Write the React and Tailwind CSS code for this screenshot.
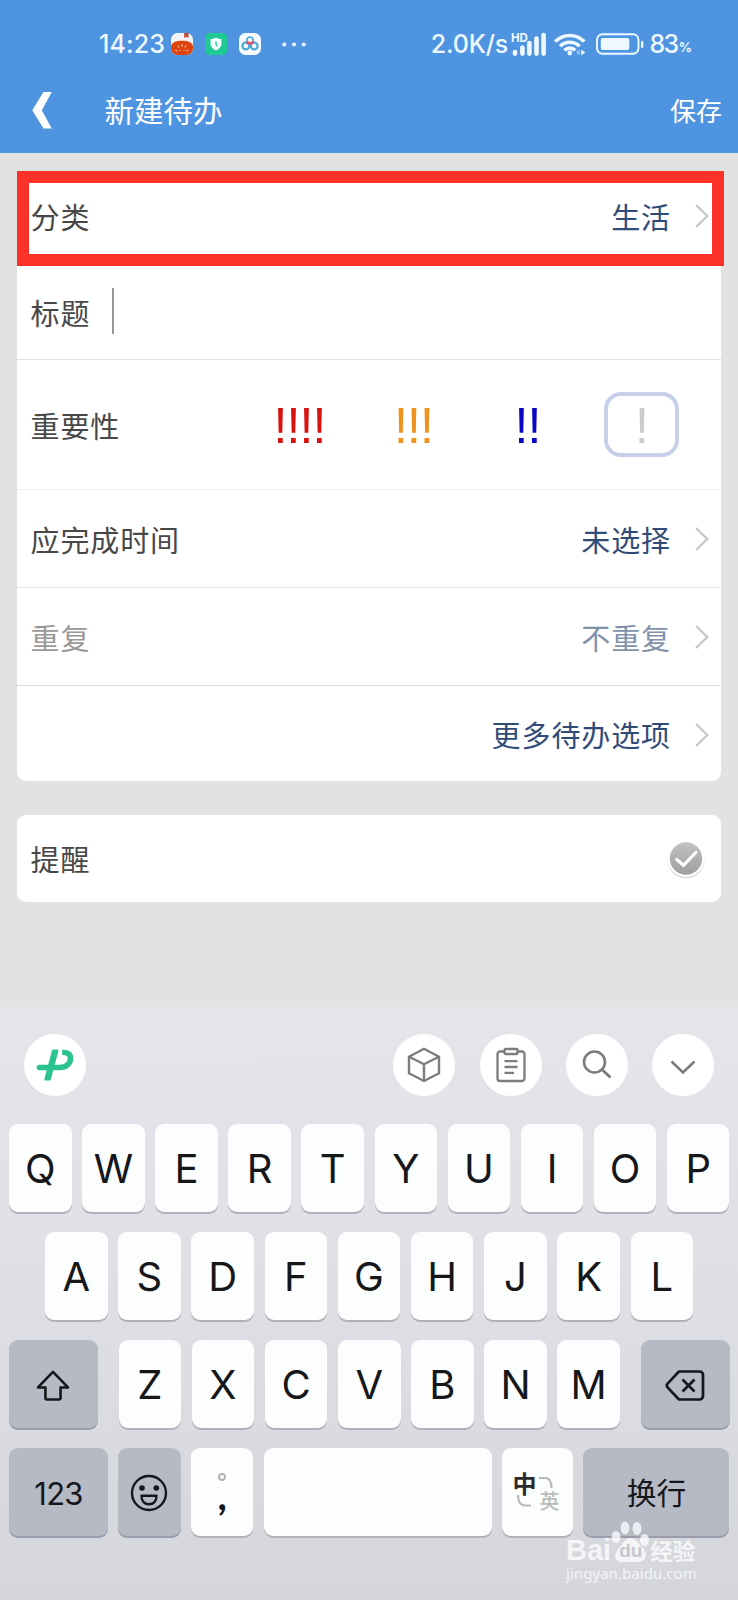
import React, { useState } from 'react';
import clsx from 'clsx';

const cjk = "font-['Noto_Sans_CJK_SC',sans-serif]";

const priorities = [
  { id: 4, mark: '!!!!', color: 'text-[#d8120f]' },
  { id: 3, mark: '!!!', color: 'text-[#ee931f]' },
  { id: 2, mark: '!!', color: 'text-[#0a06c4]' },
  { id: 1, mark: '!', color: 'text-[#cbcbcd]' },
];

const topRow = ['Q', 'W', 'E', 'R', 'T', 'Y', 'U', 'I', 'O', 'P'];
const middleRow = ['A', 'S', 'D', 'F', 'G', 'H', 'J', 'K', 'L'];
const bottomRow = ['Z', 'X', 'C', 'V', 'B', 'N', 'M'];

const Chevron = () => (
  <svg className="h-6 w-[14px] shrink-0" viewBox="0 0 14 24" fill="none" stroke="#c6c6c8" strokeWidth="2.2">
    <path d="M1 1 12.4 12 1 23" />
  </svg>
);

const StatusBar = () => (
  <div className="flex h-[88px] items-center pl-[99px] pr-[46px] font-['Inter',sans-serif] text-[25px] font-medium text-[#eef8ff]">
    <span className="mt-[2px] w-[65px] tracking-[0.1px] whitespace-nowrap">14:23</span>

    {/* Notification icons */}
    <svg className="ml-[7px] h-[22px] w-[22px]" viewBox="0 0 22 22">
      <rect width="22" height="22" rx="6.5" fill="#f4f5f7" />
      <path d="M0 13.5C.5 9.5 5 7.8 11 7.8s10.5 1.7 11 5.7v2A6.5 6.5 0 0 1 15.5 22h-9A6.5 6.5 0 0 1 0 15.5Z" fill="#dd4410" />
      <path d="M13.2 0h4.300v5l-2.100-1.300L13.200 5Z" fill="#c8452c" />
      <path d="M11 11v2.500M7 12.500l1 2M15 12.500l-1 2M4.500 17.500l2 .5M17.500 17.500l-2 .5M8.500 18l1-1M13.500 18l-1-1" stroke="#ffd9a8" strokeWidth="1" fill="none" />
    </svg>
    <svg className="ml-[12px] h-[22px] w-[22px]" viewBox="0 0 22 22">
      <rect width="22" height="22" rx="4.5" fill="#20c893" />
      <path d="M11 4.500c2 1.200 3.500 1.500 5.500 1.700v4.300c0 3.500-2.500 5.500-5.500 7-3-1.500-5.500-3.500-5.500-7V6.200c2-.2 3.500-.5 5.500-1.700Z" fill="#f2fffa" />
      <path d="M11 8.500v3l1.200 1.500" stroke="#20c893" strokeWidth="1.4" fill="none" />
    </svg>
    <svg className="ml-[12px] h-[22px] w-[22px]" viewBox="0 0 22 22" fill="none">
      <rect width="22" height="22" rx="6.5" fill="#f7fbff" />
      <circle cx="6.800" cy="13" r="3.400" stroke="#4aabd6" strokeWidth="2.200" />
      <circle cx="15.200" cy="13" r="3.400" stroke="#4aabd6" strokeWidth="2.200" />
      <circle cx="11" cy="7.500" r="3.300" stroke="#4aabd6" strokeWidth="1.800" />
      <path d="M8 8.500a3.300 3.300 0 0 0 6 0" stroke="#e8475c" strokeWidth="2.600" />
    </svg>
    <svg className="ml-[21px] h-[5px] w-[24px]" viewBox="0 0 24 5" fill="#e4f2fd">
      <circle cx="2.300" cy="2.500" r="2.100" />
      <circle cx="12" cy="2.500" r="2.100" />
      <circle cx="21.700" cy="2.500" r="2.100" />
    </svg>

    <div className="ml-auto flex items-center">
      <span className="mt-[2px] tracking-[-0.200px]">2.0K/s</span>

      {/* Signal strength */}
      <svg className="ml-[3.500px] h-[24px] w-[36px]" viewBox="0 0 36 24">
        <text x="0" y="9.500" fontSize="11.500" fontWeight="700" fill="#eef8ff" fontFamily="Inter, sans-serif">HD</text>
        <path d="M4 20v1.600M11.400 15.600v6M18.400 11v10.600M25.500 6.600v15M32.600 3v18.600" stroke="#eef8ff" strokeWidth="4.600" strokeLinecap="round" />
      </svg>

      {/* Wi-Fi */}
      <svg className="ml-[7px] h-[24px] w-[32px]" viewBox="0 0 32 24" fill="none" stroke="#eef8ff" strokeWidth="3.600">
        <path d="M1.200 9.600a20.500 20.500 0 0 1 29.200 0" />
        <path d="M6 14.200a14 14 0 0 1 19.600 0" />
        <path d="M10.300 18.300a8 8 0 0 1 11 0" />
        <circle cx="15.800" cy="21" r="2.400" fill="#eef8ff" stroke="none" />
        <path d="M25.600 17.500v6l-3.600-3.200Z" fill="#9fc5f0" stroke="none" />
        <path d="M27.200 17.500v6l4-3Z" fill="#eef8ff" stroke="none" />
      </svg>

      {/* Battery */}
      <svg className="ml-[10px] h-[22px] w-[48px]" viewBox="0 0 48 22">
        <rect x="1" y="1.200" width="41.500" height="19.600" rx="5.500" fill="none" stroke="#eef8ff" strokeWidth="1.900" />
        <rect x="4.800" y="5" width="28.500" height="12" rx="2" fill="#eef8ff" />
        <rect x="45" y="8" width="2.300" height="7" rx="1.100" fill="#eef8ff" />
      </svg>
      <span className="ml-[5px] mt-[2px] tracking-[-1.800px]">83</span>
      <span className="ml-[1.500px] mt-[8px] text-[13px] font-bold">%</span>
    </div>
  </div>
);

const Header = () => (
  <header className="h-[152.500px] bg-[#4f94e0]">
    <StatusBar />
    <div className="flex h-[43px] items-center pl-[32px] pr-[16px] text-[29.500px] leading-none text-white">
      <svg className="mt-[2px] h-[37px] w-[21px]" viewBox="0 0 21 38" fill="#fff">
        <path d="M11.500 0H20L9.800 18.800 20 37.500h-8.500L0 18.800Z" />
      </svg>
      <span className="ml-[51.500px]">新建待办</span>
      <span className="ml-auto mt-[1px] text-[26px]">保存</span>
    </div>
  </header>
);

const OptionRow = ({ label, value, className, muted }) => (
  <div className={clsx('flex items-center pl-[13.500px] pr-[12px]', className)}>
    <span className={muted ? 'text-[#989898]' : 'text-[#484848]'}>{label}</span>
    <span className={clsx('ml-auto mr-[24px]', muted ? 'text-[#8192ab]' : 'text-[#314b78]')}>{value}</span>
    <Chevron />
  </div>
);

const TodoForm = () => {
  const [priority, setPriority] = useState(1);

  return (
    <main className="h-[854.500px] pl-[17px] pr-[17px] pt-[18.500px] text-[29px] leading-none tracking-[0.900px]">
      <section className="rounded-[9px] bg-white">
        {/* Highlighted category row */}
        <div className="relative">
          <OptionRow label="分类" value="生活" className="h-[95px] pb-[5px]" />
          <div className="absolute inset-y-0 left-0 -right-[2.500px] border-[12px] border-[#fc3127]" />
        </div>

        <div className="flex h-[94px] items-center border-b border-[#e0e0e1] pl-[13.500px]">
          <span className="text-[#484848]">标题</span>
          <span className="-mt-[4px] ml-[22px] h-[46px] w-[1.500px] bg-[#969696]" />
        </div>

        <div className="flex h-[130px] items-center border-b border-[#eeeeef] pl-[13.500px]">
          <span className="w-[231px] pt-[1px] text-[#484848]">重要性</span>
          {priorities.map((item) => (
            <button
              key={item.id}
              onClick={() => setPriority(item.id)}
              className={clsx(
                "mr-[39px] flex h-[65px] w-[75px] shrink-0 items-center justify-center rounded-[17px] border-4 pl-[1px] pt-[3px] font-['Liberation_Sans',sans-serif] text-[50px] leading-none tracking-[-0.900px]",
                item.color,
                priority === item.id ? 'border-[#c6d0e9]' : 'border-transparent'
              )}
            >
              {item.mark}
            </button>
          ))}
        </div>

        <OptionRow label="应完成时间" value="未选择" className="h-[98px] border-b border-[#e0e0e1] pt-[1px]" />
        <OptionRow label="重复" value="不重复" muted className="h-[98px] border-b border-[#dcdcdd] pt-[1px]" />
        <OptionRow label="" value="更多待办选项" className="h-[95px] pt-[2px]" />
      </section>

      <section className="mt-[34px] flex h-[87px] items-center rounded-[9px] bg-white pl-[13.500px] pr-[15.500px]">
        <span className="text-[#484848]">提醒</span>
        <svg className="ml-auto h-[40px] w-[40px]" viewBox="0 0 40 40" fill="none">
          <defs>
            <linearGradient id="check" x1="0" y1="0" x2="0" y2="1">
              <stop offset="0" stopColor="#c2c2c2" />
              <stop offset="1" stopColor="#9f9f9f" />
            </linearGradient>
          </defs>
          <circle cx="20" cy="20.800" r="18.500" fill="#d9d9d9" />
          <circle cx="20" cy="19.500" r="18.500" fill="#fff" />
          <circle cx="20" cy="19.500" r="16.200" fill="url(#check)" />
          <path d="m10.800 20.500 6.700 5.800L29.800 13.500" stroke="#fff" strokeWidth="3.200" strokeLinecap="round" />
        </svg>
      </section>
    </main>
  );
};

const Key = ({ children, className, dark }) => (
  <button
    className={clsx(
      'flex h-[88px] shrink-0 items-center justify-center rounded-[9px] text-[#15171a]',
      dark ? 'bg-[#b5bac4] shadow-[0_2px_0_#9a9dab]' : 'bg-[#fcfdfd] shadow-[0_2px_0_#b1b1b9]',
      className
    )}
  >
    {children}
  </button>
);

const LetterKeys = ({ letters }) =>
  letters.map((letter) => (
    <Key key={letter} className="w-[62.500px] pt-[2px] font-['Inter',sans-serif] text-[40px] leading-none">
      {letter}
    </Key>
  ));

const ToolButton = ({ children }) => (
  <button className="flex h-[62px] w-[62px] items-center justify-center rounded-full bg-white">{children}</button>
);

const Toolbar = () => (
  <div className="flex items-center pl-[24px] pr-[24px] pt-[27px]">
    <ToolButton>
      <svg className="h-[34px] w-[38px]" viewBox="0 0 38 34" fill="none" stroke="#2cc38f">
        <path d="M17 2.500h4.500L13.800 31.500H9.300Z" fill="#2cc38f" strokeWidth="2" strokeLinejoin="round" />
        <path d="M3.500 19.500H24c6.500 0 10.500-4.300 10.500-9.200 0-4.300-3.300-6-8.300-6" strokeWidth="5.600" />
        <circle cx="3.500" cy="19.500" r="2.800" fill="#2cc38f" stroke="none" />
      </svg>
    </ToolButton>
    <div className="ml-auto flex gap-[24.200px]">
      <ToolButton>
        <svg className="h-[36px] w-[34px]" viewBox="0 0 34 36" fill="none" stroke="#7c7c7a" strokeWidth="2.400" strokeLinejoin="round">
          <path d="M17 1.800 32 9.800v16.400L17 34 2 26.200V9.800Z" />
          <path d="M2 9.800 17 17.300 32 9.800M17 17.300V34" />
        </svg>
      </ToolButton>
      <ToolButton>
        <svg className="h-[36px] w-[30px]" viewBox="0 0 30 36" fill="none" stroke="#7c7c7a" strokeWidth="2.300">
          <path d="M8.500 4.500H4A2.500 2.500 0 0 0 1.500 7v24.500A2.500 2.500 0 0 0 4 34h22a2.500 2.500 0 0 0 2.500-2.500V7A2.500 2.500 0 0 0 26 4.500h-4.500" />
          <rect x="8.500" y="2" width="13" height="5" rx="1" />
          <path d="M8.500 14.200h13M8.500 20h13M8.500 25.800h9.500" strokeWidth="2.300" />
        </svg>
      </ToolButton>
      <ToolButton>
        <svg className="-mt-[2px] h-[30px] w-[30px]" viewBox="0 0 30 30" fill="none" stroke="#7c7c7a" strokeWidth="2.600">
          <circle cx="12.500" cy="13" r="10.500" />
          <path d="m20 20.500 8.500 8" strokeWidth="3" />
        </svg>
      </ToolButton>
      <ToolButton>
        <svg className="mt-[4px] h-[15px] w-[26px]" viewBox="0 0 26 15" fill="none" stroke="#7c7c7a" strokeWidth="2.500">
          <path d="M1.500 1.500 13 12.500 24.500 1.500" />
        </svg>
      </ToolButton>
    </div>
  </div>
);

const Watermark = () => (
  <div className="absolute left-[566px] top-[514px] w-[134px] text-white opacity-75">
    <div className="flex h-[42px] items-end">
      <span className="font-['Liberation_Sans',sans-serif] text-[29px] font-bold leading-[26px]">Bai</span>
      <div className="relative -ml-[1px] h-[42px] w-[39px]">
        <svg className="h-[42px] w-[39px]" viewBox="0 0 39 42" fill="#fff">
          <ellipse cx="6" cy="16" rx="4.500" ry="6" />
          <ellipse cx="15" cy="7" rx="4.500" ry="6.500" />
          <ellipse cx="27" cy="7.500" rx="4.500" ry="6.500" />
          <ellipse cx="34.500" cy="19" rx="4.500" ry="6" />
          <path d="M20.500 17c5 0 7 4.500 10.500 8 4 4 6 7 4.500 11-2 6-8 5-15 5s-14 1-15-4.500c-1-5 2-7.500 5.500-11.500 3-3.500 5-8 9.500-8Z" />
        </svg>
        <span className="absolute left-[9px] top-[20px] font-['Liberation_Sans',sans-serif] text-[19px] font-bold leading-[20px] text-[#bfc2ca]">du</span>
      </div>
      <span className="ml-[1px] text-[22.500px] font-bold leading-[26px]">经验</span>
    </div>
    <div className="mt-[1px] font-['Noto_Sans',sans-serif] text-[15px] leading-[18px] tracking-[0.050px] whitespace-nowrap">jingyan.baidu.com</div>
  </div>
);

const Keyboard = () => (
  <div className="relative h-[593px] bg-linear-to-b from-[#e5e5eb] via-[#dedfe5] to-[#d5d6dc]">
    <Toolbar />

    <div className="mt-[28px] flex flex-col gap-[20px] pl-[9px] pr-[8.500px]">
      <div className="flex justify-between">
        <LetterKeys letters={topRow} />
      </div>
      <div className="flex justify-between pl-[36px] pr-[36.500px]">
        <LetterKeys letters={middleRow} />
      </div>
      <div className="flex justify-between">
        <Key dark className="w-[88.500px]">
          <svg className="mt-[2px] h-[31px] w-[36px]" viewBox="0 0 36 32" fill="none" stroke="#15171a" strokeWidth="2.700" strokeLinejoin="round">
            <path d="M18 2 33.500 18h-7.700v11a1.500 1.500 0 0 1-1.500 1.500H11.700a1.500 1.500 0 0 1-1.500-1.500V18H2.500Z" />
          </svg>
        </Key>
        <div className="flex gap-[10.650px]">
          <LetterKeys letters={bottomRow} />
        </div>
        <Key dark className="w-[88.500px]">
          <svg className="mt-[2px] h-[31px] w-[40px]" viewBox="0 0 40 31" fill="none" stroke="#15171a" strokeWidth="2.700" strokeLinejoin="round">
            <path d="M14 1.500h20.500A3.500 3.500 0 0 1 38 5v21a3.500 3.500 0 0 1-3.500 3.500H14L2.800 17.600a3 3 0 0 1 0-4.200Z" />
            <path d="m17.500 9.500 12 12M29.500 9.500l-12 12" />
          </svg>
        </Key>
      </div>
      <div className="flex justify-between">
        <Key dark className="w-[99px] pt-[2px] font-['Inter',sans-serif] text-[31px] leading-none tracking-[-0.800px]">123</Key>
        <Key dark className="w-[62.500px]">
          <svg className="mt-[2px] h-[38px] w-[38px]" viewBox="0 0 38 38" fill="none" stroke="#15171a" strokeWidth="2.400">
            <circle cx="19" cy="19" r="17" />
            <circle cx="12" cy="14" r="2.800" fill="#15171a" stroke="none" />
            <circle cx="26.300" cy="14" r="2.800" fill="#15171a" stroke="none" />
            <path d="M11.500 21.800h15c0 5.500-3 8.500-7.500 8.500s-7.500-3-7.500-8.500Z" strokeLinejoin="round" />
          </svg>
        </Key>
        <Key className="w-[62.500px] flex-col">
          <span className="mt-[10px] h-[8.500px] w-[8.500px] shrink-0 rounded-full border-2 border-[#b4b5b7]" />
          <span className="h-[40px] font-['Lato',sans-serif] text-[40px] font-bold leading-[28px]">,</span>
        </Key>
        <Key className="w-[228px]" />
        <Key className="w-[71.500px]">
          <div className="grid grid-cols-2 items-center gap-x-[2px]">
            <span className="-mt-[3px] ml-[1px] text-[24px] font-bold leading-[25px] text-[#2b2b2b]">中</span>
            <svg className="-mt-[2px] h-[12px] w-[14px]" viewBox="0 0 14 12" fill="none" stroke="#b9babb" strokeWidth="2.200">
              <path d="M0 1h6c4 0 6.500 3 6.500 10" />
            </svg>
            <svg className="-mt-[4px] ml-[5px] h-[12px] w-[14px]" viewBox="0 0 14 12" fill="none" stroke="#b9babb" strokeWidth="2.200">
              <path d="M1 0c0 7 3 10.500 7 10.500h6" />
            </svg>
            <span className="-mt-[4px] -ml-[3px] text-[20px] font-medium leading-[20px] text-[#b9babb]">英</span>
          </div>
        </Key>
        <Key dark className="w-[146px] text-[29.800px] leading-none">换行</Key>
      </div>
    </div>

    <Watermark />
  </div>
);

const App = () => (
  <div className={clsx('h-[1600px] w-[738px] overflow-hidden bg-[#e2e2e3]', cjk)}>
    <Header />
    <TodoForm />
    <Keyboard />
  </div>
);

export default App;
